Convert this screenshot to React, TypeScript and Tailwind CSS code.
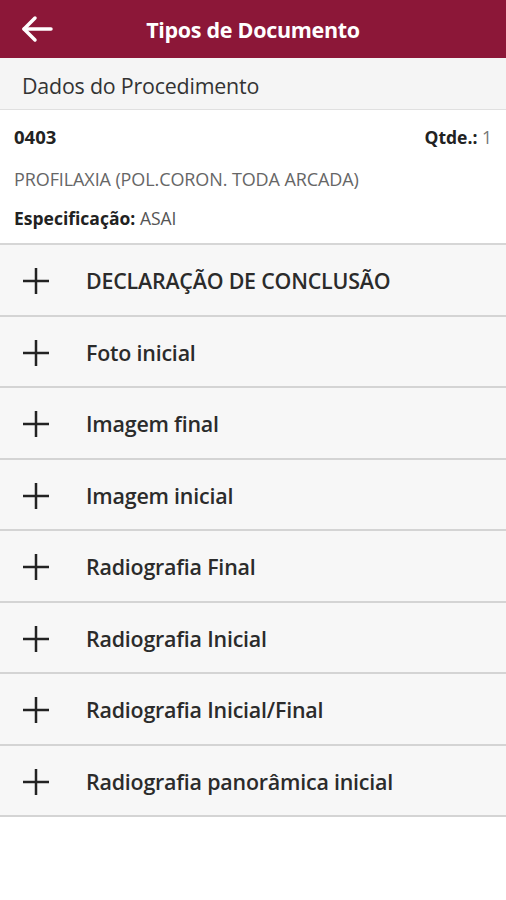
import React from "react";

const items = [
  "DECLARAÇÃO DE CONCLUSÃO",
  "Foto inicial",
  "Imagem final",
  "Imagem inicial",
  "Radiografia Final",
  "Radiografia Inicial",
  "Radiografia Inicial/Final",
  "Radiografia panorâmica inicial",
];

export default function App() {
  return (
    <div className="w-[506px] min-h-[900px] bg-white" style={{ fontFamily: '"Open Sans", "Noto Sans", sans-serif' }}>
      <header className="h-[58px] bg-[#8c1738] flex items-center relative">
        <div className="absolute left-[20px] top-[15px]">
          <svg width="34" height="28" viewBox="0 0 34 28" fill="none" stroke="white" strokeWidth="3.5" strokeLinecap="round" strokeLinejoin="round">
            <path d="M31 14H4" />
            <path d="M15 3L4 14l11 11" />
          </svg>
        </div>
        <h1 className="w-full text-center text-white text-[21.5px] font-bold tracking-[-0.3px] pt-[2px]">Tipos de Documento</h1>
      </header>
      <div className="h-[52px] bg-[#f5f5f5] border-b border-[#e0e0e0] flex items-center pt-[5px] px-[22px] text-[21.4px] text-[#333] tracking-[-0.2px]">
        Dados do Procedimento
      </div>
      <div className="h-[135px] px-[14px] pt-[15px] text-[17.5px] leading-[24px] border-b-2 border-[#d6d6d6]">
        <div className="flex justify-between">
          <span className="font-bold text-[#222] text-[18.5px]">0403</span>
          <span className="font-bold text-[#222]">Qtde.: <span className="font-normal text-[#777]">1</span></span>
        </div>
        <div className="mt-[18px] text-[#666] text-[18px] tracking-[-0.1px]">PROFILAXIA (POL.CORON. TODA ARCADA)</div>
        <div className="mt-[15px] text-[#222]"><span className="font-bold">Especificação:</span> <span className="text-[#555]">ASAI</span></div>
      </div>
      {items.map((t) => (
        <div key={t} className="h-[71.5px] bg-[#f7f7f7] border-b-2 border-[#d4d4d4] flex items-center pt-[3px]">
          <div className="w-[86px] pl-[22px] flex items-center">
            <svg width="28" height="28" viewBox="0 0 28 28" stroke="#222" strokeWidth="2.5">
              <path d="M14 1v26M1 14h26" />
            </svg>
          </div>
          <span className="text-[21.4px] font-semibold text-[#2b2b2b] tracking-[-0.2px]">{t}</span>
        </div>
      ))}
    </div>
  );
}
